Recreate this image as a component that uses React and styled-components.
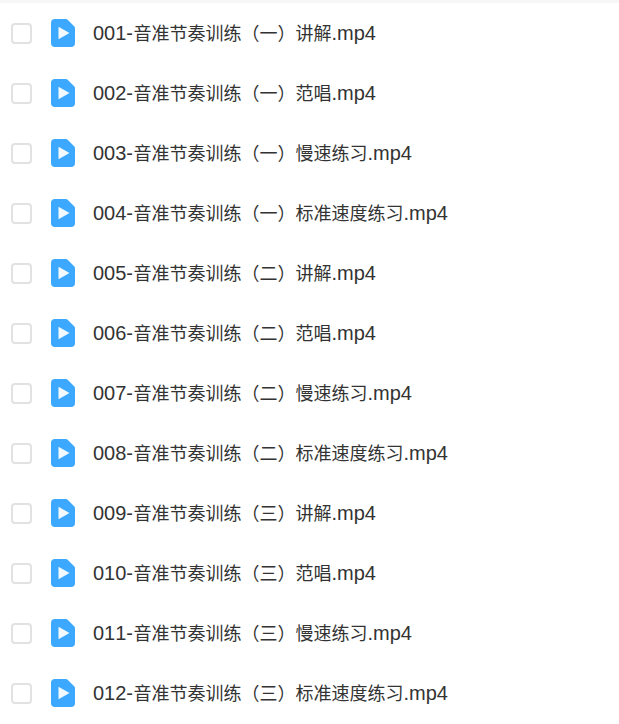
import React from "react";
import styled, { createGlobalStyle } from "styled-components";

const files = [
  ["001-", "音准节奏训练（一）讲解", ".mp4"],
  ["002-", "音准节奏训练（一）范唱", ".mp4"],
  ["003-", "音准节奏训练（一）慢速练习", ".mp4"],
  ["004-", "音准节奏训练（一）标准速度练习", ".mp4"],
  ["005-", "音准节奏训练（二）讲解", ".mp4"],
  ["006-", "音准节奏训练（二）范唱", ".mp4"],
  ["007-", "音准节奏训练（二）慢速练习", ".mp4"],
  ["008-", "音准节奏训练（二）标准速度练习", ".mp4"],
  ["009-", "音准节奏训练（三）讲解", ".mp4"],
  ["010-", "音准节奏训练（三）范唱", ".mp4"],
  ["011-", "音准节奏训练（三）慢速练习", ".mp4"],
  ["012-", "音准节奏训练（三）标准速度练习", ".mp4"],
];

function VideoIcon() {
  return (
    <IconBox width="24" height="28" viewBox="0 0 24 28">
      <path
        d="M4 0H15a2 2 0 0 1 1.4.6L23.4 7.6A2 2 0 0 1 24 9V24a4 4 0 0 1-4 4H4a4 4 0 0 1-4-4V4a4 4 0 0 1 4-4Z"
        fill="#3ca8ff"
      />
      <path d="M7.5 7.8L18.5 14L7.5 20.2Z" fill="#f2f9ff" />
    </IconBox>
  );
}

export default function App() {
  return (
    <>
      <GlobalStyle />
      <FileList>
        {files.map(([num, title, ext]) => (
          <FileRow key={num}>
            <CheckBox />
            <VideoIcon />
            <FileName>
              <Latin>{num}</Latin>
              <Title>{title}</Title>
              <Latin>{ext}</Latin>
            </FileName>
          </FileRow>
        ))}
      </FileList>
    </>
  );
}

const GlobalStyle = createGlobalStyle`
  html, body {
    margin: 0;
    padding: 0;
    background: #fff;
  }
`;

const FileList = styled.div`
  width: 619px;
  height: 724px;
  overflow: hidden;
  border-top: 3px solid #f7f7f7;
  box-sizing: border-box;
`;

const FileRow = styled.div`
  display: flex;
  align-items: center;
  height: 60px;
  padding-left: 11px;
`;

const CheckBox = styled.span`
  width: 21px;
  height: 21px;
  box-sizing: border-box;
  border: 2px solid #e2e2e2;
  border-radius: 4px;
  background: #fff;
  flex-shrink: 0;
`;

const IconBox = styled.svg`
  margin-left: 19px;
  margin-bottom: 1px;
  flex-shrink: 0;
`;

const FileName = styled.span`
  margin-left: 18px;
  margin-top: -2px;
  font-family: "Noto Sans CJK SC", sans-serif;
  font-size: 18px;
  line-height: 26px;
  color: #333;
  white-space: nowrap;
`;

const Title = styled.span`
  margin-left: 0.5px;
`;

const Latin = styled.span`
  font-family: "Liberation Sans", sans-serif;
  font-size: 20px;
  font-kerning: none;
`;
